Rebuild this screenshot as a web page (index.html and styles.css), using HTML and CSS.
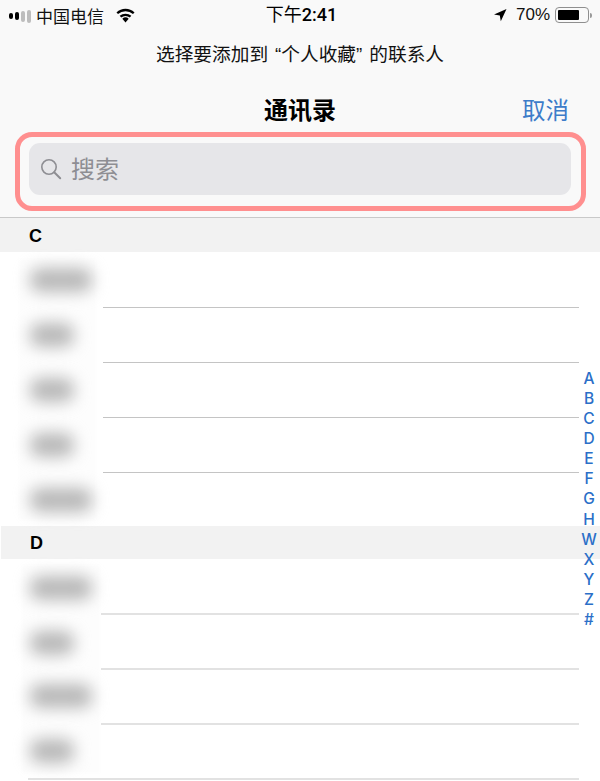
FILE: index.html
```html
<!DOCTYPE html>
<html lang="zh">
<head>
<meta charset="utf-8">
<title>通讯录</title>
<link rel="stylesheet" href="styles.css">
</head>
<body>
<div class="phone">
  <header class="top">
    <div class="status">
      <div class="status-left">
        <span class="signal"><i class="on"></i><i class="on"></i><i></i><i></i></span>
        <span class="carrier">中国电信</span>
        <svg class="wifi" width="21" height="15" viewBox="0 0 22 16"><path d="M11 15.5 7.6 11.4a5.2 5.2 0 0 1 6.8 0Z" fill="#000"/><path d="M5.6 9.3a8.2 8.2 0 0 1 10.8 0" fill="none" stroke="#000" stroke-width="2.5"/><path d="M2.2 5.6a13 13 0 0 1 17.6 0" fill="none" stroke="#000" stroke-width="2.5"/></svg>
      </div>
      <div class="clock">下午<span class="clock-digits">2:41</span></div>
      <div class="status-right">
        <svg class="arrow" width="14" height="14" viewBox="0 0 14 14"><path d="M13.5 1 1 6.6l5.8 1 1 5.6Z" fill="#000"/></svg>
        <span class="pct">70%</span>
        <span class="battery"><span class="battery-fill"></span></span>
        <span class="battery-tip"></span>
      </div>
    </div>
    <div class="prompt">选择要添加到<span class="quote-open">“</span>个人收藏<span class="quote-close">”</span>的联系人</div>
    <div class="nav">
      <h1 class="title">通讯录</h1>
      <span class="cancel">取消</span>
    </div>
    <div class="search-frame">
      <div class="search">
        <svg class="glass" width="22" height="22" viewBox="0 0 22 22"><circle cx="9" cy="9" r="7.2" fill="none" stroke="#8e8e93" stroke-width="1.6"/><path d="m14.2 14.2 6 6" stroke="#8e8e93" stroke-width="2" stroke-linecap="round"/></svg>
        <span class="placeholder">搜索</span>
      </div>
    </div>
  </header>

  <section>
    <div class="section-head">C</div>
    <div class="group group-c">
      <div class="fog"></div>
      <div class="row"><span class="smudge wide"></span></div>
      <div class="row"><span class="smudge short"></span></div>
      <div class="row"><span class="smudge short"></span></div>
      <div class="row"><span class="smudge short"></span></div>
      <div class="row last"><span class="smudge wide"></span></div>
    </div>
  </section>

  <section>
    <div class="section-head head-d">D</div>
    <div class="group group-d">
      <div class="fog"></div>
      <div class="row row-d"><span class="smudge wide"></span></div>
      <div class="row row-d"><span class="smudge short"></span></div>
      <div class="row row-d"><span class="smudge wide"></span></div>
      <div class="row row-d end"><span class="smudge short"></span></div>
    </div>
  </section>

  <nav class="index">
    <span>A</span><span>B</span><span>C</span><span>D</span><span>E</span><span>F</span><span>G</span><span>H</span><span>W</span><span>X</span><span>Y</span><span>Z</span><span>#</span>
  </nav>
</div>
</body>
</html>
```

FILE: styles.css
```css
* { box-sizing: border-box; }
html, body { margin: 0; padding: 0; }
body {
  background: #fff;
  font-family: "Liberation Sans", "Noto Sans CJK SC", sans-serif;
  color: #000;
}
.phone { position: relative; width: 600px; height: 781px; overflow: hidden; background: #fff; }

.top { height: 218px; background: #f9f9f9; border-bottom: 1px solid #c9c9c9; }

.status { position: relative; display: flex; justify-content: space-between; align-items: center; height: 30px; padding: 0 8px 0 9px; }
.status-left, .status-right { display: flex; align-items: center; }
.signal { display: flex; align-items: center; gap: 2px; height: 14px; margin-top: 2px; }
.signal i { display: block; width: 4px; height: 6px; border-radius: 2px; background: #bdbdbd; }
.signal i:nth-child(1) { height: 6px; background: #000; }
.signal i:nth-child(2) { height: 8px; background: #000; }
.signal i:nth-child(3) { height: 11px; }
.signal i:nth-child(4) { height: 13px; }
.carrier { margin-left: 5px; font-size: 17px; color: #111; }
.wifi { margin-left: 11px; }
.clock { position: absolute; left: 3px; right: 0; text-align: center; font-family: Roboto, "Noto Sans CJK SC", sans-serif; font-size: 18px; line-height: 30px; color: #000; }
.clock-digits { font-weight: 500; }
.arrow { margin-right: 9px; }
.pct { font-size: 17px; color: #111; margin-right: 5px; }
.battery { display: block; width: 34px; height: 16px; padding: 2px; border: 1px solid #8f8f8f; border-radius: 4px; }
.battery-fill { display: block; width: 21px; height: 100%; background: #000; border-radius: 1px; }
.battery-tip { display: block; width: 2px; height: 5px; margin-left: 1px; background: #9a9a9a; border-radius: 0 2px 2px 0; }

.prompt { margin-top: 11px; height: 28px; line-height: 28px; text-align: center; font-size: 18.7px; color: #111; }
.quote-open { margin-left: 7px; }
.quote-close { margin-right: 7px; }

.nav { position: relative; height: 44px; margin-top: 20px; }
.title { margin: 0; text-align: center; font-size: 24px; line-height: 44px; font-weight: 700; color: #000; }
.cancel { position: absolute; right: 31px; top: 0; font-size: 23.5px; line-height: 44px; color: #3d7cc9; }

.search-frame { width: 571px; height: 79px; margin: -1px 0 0 15px; padding: 6px 10px 10px 9px; border: 5px solid #ff8f8f; border-radius: 17px; }
.search { display: flex; align-items: center; height: 52px; padding-left: 11px; background: #e6e6e9; border-radius: 11px; }
.glass { flex: none; }
.placeholder { margin-left: 9px; padding-bottom: 4px; font-size: 24px; color: #8e8e93; }

.section-head { height: 34px; padding-left: 29px; background: #f2f2f2; font-size: 18px; font-weight: 700; line-height: 36px; }
.head-d { height: 33px; margin-left: 1px; line-height: 35px; }

.group { position: relative; }
.fog { position: absolute; left: 19px; top: 7px; width: 77px; height: 261px; background: #fdfdfd; filter: blur(1px); }
.group-d .fog { left: 22px; top: 6px; height: 208px; width: 78px; }

.row { position: relative; height: 55px; margin-right: 21px; }
.row::after { content: ""; position: absolute; left: 103px; right: 0; bottom: -1px; height: 1px; background: #c4c4c4; }
.row.last { height: 54px; }
.row.last::after { display: none; }
.row-d::after { left: 101px; height: 2px; background: #e2e2e2; }
.row-d.end::after { left: 28px; bottom: -1px; }

.smudge { position: absolute; left: 30px; top: 16px; height: 24px; background: #b8b8b8; border-radius: 10px; filter: blur(8px); }
.smudge.wide { width: 62px; }
.smudge.short { width: 44px; }
.row-d .smudge { top: 17px; }
.row-d:nth-child(4) .smudge, .row-d:nth-child(5) .smudge { top: 15px; }

.index { position: absolute; right: 3px; top: 369px; width: 16px; display: flex; flex-direction: column; align-items: center; font-family: Inter, "Liberation Sans", sans-serif; font-size: 15.5px; font-weight: 500; line-height: 20px; color: #2b6fc8; }
.index span { display: block; height: 20.08px; }
```
